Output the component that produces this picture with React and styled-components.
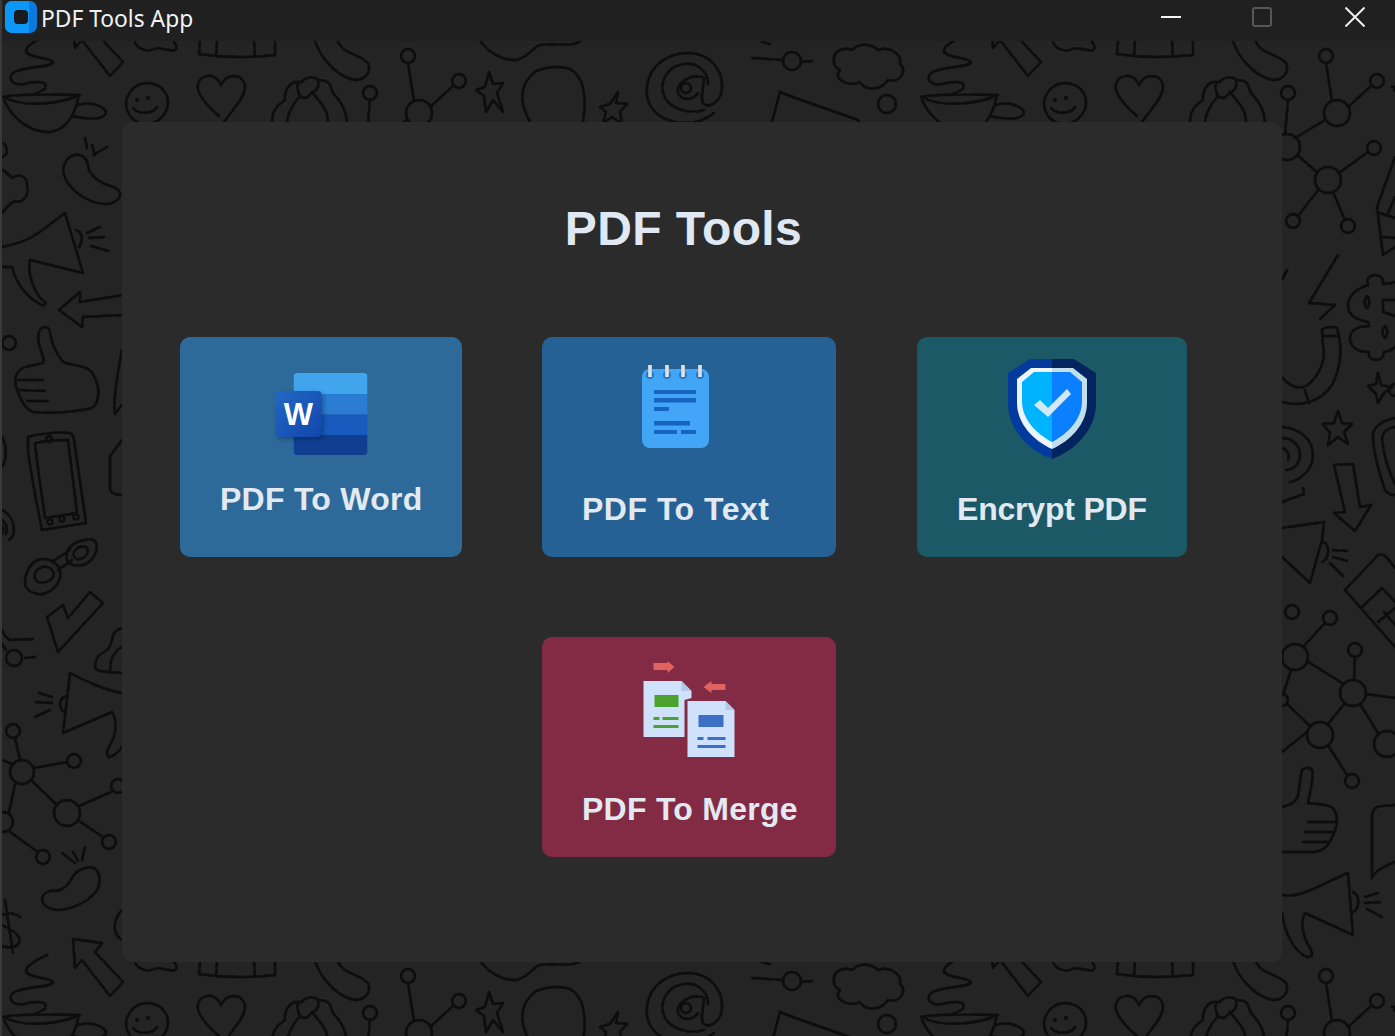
import React from "react";
import styled, { createGlobalStyle } from "styled-components";

const Global = createGlobalStyle`
  html, body { margin: 0; padding: 0; background: #232323; }
  body { font-family: "Liberation Sans", Arial, sans-serif; overflow: hidden; }
  * { box-sizing: border-box; }
`;

const Root = styled.div`
  position: relative;
  width: 1395px;
  height: 1036px;
  overflow: hidden;
  background: #242424;
  &::before {
    content: "";
    position: absolute;
    left: 0; top: 0; bottom: 0;
    width: 2px;
    background: #3a3a3a;
    z-index: 2;
  }
`;

const Wallpaper = styled.svg`
  position: absolute;
  inset: 0;
  width: 1395px;
  height: 1036px;
  fill: none;
  stroke: #0b0b0b;
  stroke-width: 2.5;
  stroke-linecap: round;
  stroke-linejoin: round;
`;

const TitleBar = styled.header`
  position: relative;
  z-index: 1;
  display: flex;
  align-items: center;
  height: 41px;
  background: #202020;
  padding-left: 5px;
`;

const AppLogo = styled.svg`
  width: 32px;
  height: 32px;
  margin-top: -7px;
`;

const AppTitle = styled.span`
  margin-left: 4px;
  margin-top: -4px;
  font-family: "Noto Sans", "Open Sans", sans-serif;
  font-size: 22.8px;
  color: #f2f2f2;
  flex: 1;
`;

const WinButton = styled.button`
  display: flex;
  align-items: center;
  justify-content: center;
  border: 0;
  padding: 0;
  background: none;
  width: 20px;
  height: 20px;
  margin-top: -7px;
  margin-right: ${(p) => p.$mr}px;
`;

const Panel = styled.main`
  position: relative;
  z-index: 1;
  margin: 81px 0 0 122px;
  width: 1160px;
  height: 840px;
  border-radius: 10px;
  background: #2b2b2b;
  padding: 83px 0 0 58px;
`;

const Content = styled.div`
  width: 1007px;
`;

const Heading = styled.h1`
  margin: 0;
  text-align: center;
  font-size: 48px;
  line-height: 48px;
  font-weight: 700;
  letter-spacing: 0.4px;
  color: #dfe8f3;
`;

const Grid = styled.div`
  margin-top: 84px;
  display: grid;
  grid-template-columns: 282px 295px 270px;
  grid-auto-rows: 220px;
  column-gap: 80px;
  row-gap: 80px;
`;

const Card = styled.button`
  display: flex;
  justify-content: flex-start;
  align-items: flex-start;
  width: ${(p) => (p.$w ? `${p.$w}px` : "100%")};
  grid-column: ${(p) => p.$col || "auto"};
  border: 0;
  border-radius: 10px;
  background: ${(p) => p.$bg};
  padding: ${(p) => p.$top}px 40px 0;
  font-family: inherit;
`;

const CardBody = styled.span`
  display: flex;
  flex-direction: column;
  align-items: center;
  gap: ${(p) => p.$gap}px;
`;

const IconSlot = styled.svg`
  display: block;
  width: 100px;
  height: 100px;
`;

const Label = styled.span`
  font-size: 32px;
  line-height: 37px;
  font-weight: 700;
  letter-spacing: ${(p) => p.$ls}px;
  color: #e3e9f0;
  white-space: nowrap;
`;

const WordLetter = styled.text`
  font-family: "Liberation Sans", Arial, sans-serif;
  font-size: 31px;
  font-weight: 700;
  fill: #fff;
`;

const paths = [
  // steam + cup
  "M47 35 C36 40 22 48 27 53 C32 58 52 58 53 62 C52 68 20 66 12 74 C8 80 14 86 24 84 C34 81 46 81 46 86 C46 90 38 93 32 95",
  "M3 97 C28 93 55 95 80 95 C60 104 25 108 3 97 Z",
  "M4 100 C14 122 34 133 50 132 C66 130 75 115 79 95",
  "M76 106 C88 100 104 106 106 112 C106 120 88 120 72 116",
  // arrow
  "M73 939 L102 943 L95 952 L123 982 L110 996 L82 960 L75 968 Z",
  // top row fragments
  "M135 42 C138 50 148 52 154 49 C160 46 168 52 175 50 C178 48 176 44 174 42",
  "M200 42 L199 54 C225 58 250 58 275 55 L275 42 M217 42 L216 56 M254 42 L255 56",
  "M314 38 C320 60 340 78 355 80 C365 80 372 72 368 63 C362 56 352 55 345 50 C340 47 338 42 336 38",
  "M481 42 C490 54 505 61 516 60 C528 58 532 48 540 45 C552 43 565 46 573 44 C577 43 579 42 580 41",
  // smile
  "M147 83 C160 83 169 93 168 104 C167 115 157 124 146 124 C134 124 126 114 126 103 C127 92 136 83 147 83 Z",
  "M133 108 C138 114 152 115 157 107",
  // heart
  "M219 116 C205 104 196 92 198 84 C201 74 215 72 221 85 C227 73 242 73 245 85 C246 97 232 110 224 122",
  // hands
  "M272 122 C272 112 276 106 285 100 C284 92 288 84 295 82 C298 82 300 82 302 82 C304 78 314 75 318 80 C322 80 328 80 330 85 C332 90 332 92 333 93 C340 100 346 108 347 122",
  "M287 122 C288 112 292 105 300 96 C297 90 297 86 298 84 M318 80 C320 86 316 92 312 92 C318 100 328 108 328 122",
  "M300 96 C304 100 308 98 312 92",
  // node group
  "M408 63 L414 101 M452 87 L430 107 M407 120 L377 138 M370 100 L367 134",
  // star
  "M489 72 L493 84 L503 83 L497 93 L503 112 L493 100 L486 112 L484 96 L476 90 L485 87 Z",
  // bubble
  "M530 122 C520 104 518 85 536 71 C548 66 562 66 570 69 C583 76 587 95 583 122",
  // star small
  "M618 92 L616 103 L627 104 L620 112 L622 124 L612 117 L603 123 L606 112 L600 107 L610 104 Z",
  // at-sign
  "M714 113 C703 122 690 125 675 122 C655 118 645 104 647 86 C650 64 670 52 690 53 C710 54 723 70 722 88 C721 102 710 108 704 104 C699 100 704 86 704 78",
  "M704 110 C690 114 672 110 665 98 C658 84 666 66 684 64 C698 62 708 72 708 84",
  "M704 78 C696 74 682 78 678 88 C676 100 692 103 698 93",
  // slider
  "M752 58 L782 60 M802 62 L812 61 M762 42 L770 44",
  // cloud
  "M834 62 C832 52 842 46 852 50 C860 42 872 44 878 50 C890 46 902 54 900 64 C908 70 900 84 888 80 C880 92 864 90 860 82 C848 88 832 78 840 70 C836 68 834 66 834 62 Z",
  // shoe
  "M772 122 L780 92 C800 100 830 110 858 120 L860 124",
  // left strip: ringing phone
  "M85 138 L87 148 M92 145 L95 155 M107 147 L93 155",
  "M75 155 C65 157 62 168 64 175 C68 188 85 203 105 204 C115 204 121 198 120 193 C118 187 110 186 105 184 C95 180 88 172 88 165 C87 158 82 154 75 155 Z",
  "M2 143 C8 145 9 155 2 157",
  "M2 170 C8 172 10 176 12 178 C20 172 28 178 27 186 C30 195 22 204 15 201 C10 203 6 208 2 213",
  // megaphone
  "M2 247 C12 245 22 242 30 238 C42 232 55 220 65 213 L83 273 L30 260 C27 272 34 295 45 302 C46 305 44 306 42 305 C30 300 16 285 12 267 L2 267",
  "M76 230 C82 232 84 240 79 247",
  "M87 233 L100 227 M89 238 L104 237 M91 246 L108 251",
  // arrow left
  "M124 295 L80 302 L80 292 L59 310 L82 327 L83 317 L124 315",
  // thumb
  "M45 327 C38 328 37 336 39 344 C41 352 45 358 43 363 C32 366 22 366 18 372 C14 378 14 384 18 392 C21 400 24 408 33 412 C50 414 75 412 92 408 C98 404 99 396 98 387 C96 378 93 372 88 369 C80 365 70 365 63 362 C55 352 51 342 50 332 C49 328 47 327 45 327 Z",
  "M18 380 L43 380 M20 390 L45 391 M27 401 L48 401",
  "M122 350 C118 370 116 385 115 395 C114 403 114 410 115 414 L122 405",
  // phone
  "M28 437 C40 433 60 432 70 433 C73 434 73 436 74 440 L86 523 L42 530 C38 510 30 470 28 450 Z",
  "M35 443 C45 441 58 440 68 440 L77 513 L45 518 C42 495 37 465 35 443 Z",
  "M2 437 C7 447 7 458 2 467",
  "M122 440 L110 456 L110 490 C112 494 118 495 122 495",
  // left @
  "M2 510 C10 514 14 522 14 530 C14 534 12 538 9 540 M2 520 C6 523 8 528 6 534 M2 526 C4 528 4 532 2 534",
  // chain
  "M28 570 C34 556 50 556 58 566 C64 576 58 588 46 593 C36 597 24 590 25 582 C25 577 26 574 28 570 Z",
  "M36 571 C42 564 52 566 54 574 C53 580 46 584 38 582 C34 579 34 575 36 571 Z",
  "M68 550 C72 542 86 538 94 540 C100 546 96 558 86 564 C78 567 70 566 67 560 C66 556 67 552 68 550 Z",
  "M74 552 C78 545 87 545 88 550 C88 556 82 560 77 559 C73 557 73 554 74 552 Z",
  "M52 562 L70 550 M58 570 L72 560",
  // check
  "M47 617 L63 605 L68 618 L90 592 L103 603 L58 652 Z",
  // left scale
  "M2 630 C4 636 8 640 12 640 L33 639 M25 658 L35 657 M2 644 L6 650",
  // cloud 2
  "M122 628 C116 630 112 633 112 640 C110 648 108 650 104 652 C98 655 95 660 95 666 C95 671 100 672 122 673 M122 647 C116 650 110 656 110 672",
  // megaphone 2
  "M122 693 C104 690 88 682 70 673 L63 733 L112 712 C118 722 116 735 110 745 C106 752 106 757 110 757 C115 755 120 750 122 747",
  "M67 696 C58 698 58 710 65 712",
  "M39 693 L52 697 M36 702 L52 703 M35 717 L50 710",
  // network links
  "M15 738 L20 760 M34 768 L67 762 M31 780 L57 805 M15 785 L9 812 M2 760 L12 764 M10 832 L38 852 M79 821 L103 837 M79 806 L111 792",
  // ringing 3
  "M62 853 L75 863 M73 852 L78 861 M85 847 L82 860",
  "M42 898 C44 892 50 890 56 891 C62 890 68 886 72 878 C76 870 86 866 94 868 C100 872 101 880 98 888 C92 900 76 908 60 910 C50 910 42 906 42 898 Z",
  // dollar
  "M5 900 L13 953 M2 915 C10 912 15 913 20 917 M2 925 C12 930 22 935 19 943 C16 948 8 948 2 946",
  "M122 910 C116 916 114 924 115 930 C116 934 118 938 122 940",
  // right strip: kite
  "M1395 157 L1377 207 L1383 255 L1395 247 M1377 212 L1395 218 M1383 237 L1395 238 M1395 197 L1388 213",
  // bolt
  "M1338 255 L1309 303 L1335 305 L1320 319 M1287 270 L1282 280",
  // dollar big
  "M1395 282 C1390 284 1386 284 1383 284 C1384 278 1380 275 1375 275 C1369 275 1366 280 1368 285 C1355 289 1348 297 1348 306 C1348 316 1358 320 1368 322 L1369 326 C1358 326 1349 330 1350 340 C1352 350 1362 352 1369 352 C1368 358 1372 360 1376 360 C1382 360 1384 356 1384 352 C1390 351 1393 349 1395 347",
  "M1367 296 C1364 298 1364 306 1367 308 C1370 306 1370 298 1367 296 Z",
  "M1385 326 C1382 328 1382 336 1385 338 C1388 336 1388 328 1385 326 Z",
  "M1395 300 L1383 300 L1383 312 L1395 316",
  // magnet
  "M1322 330 C1322 327 1335 326 1337 328 C1342 345 1342 365 1332 385 C1322 400 1303 408 1282 402",
  "M1322 330 L1323 345 C1327 360 1318 378 1306 386 C1298 390 1288 385 1282 377 M1322 336 L1337 336 M1305 390 L1309 403",
  // stars
  "M1338 411 L1342 423 L1352 424 L1344 432 L1348 444 L1338 437 L1328 445 L1330 433 L1323 424 L1334 423 Z",
  "M1378 373 L1381 385 L1392 387 L1384 393 L1378 403 L1376 394 L1368 386 L1376 384 Z",
  // @ side
  "M1282 427 C1300 428 1313 440 1313 455 C1313 470 1300 480 1290 482 M1282 438 C1292 438 1300 445 1300 455 C1300 463 1294 470 1286 470 M1282 448 C1288 450 1290 456 1288 460 M1303 488 L1304 494 L1282 502",
  // phone right
  "M1395 418 C1385 420 1376 425 1373 433 C1372 450 1380 475 1385 490 C1388 494 1392 495 1395 495 M1395 427 C1388 428 1382 432 1382 440 C1384 455 1388 470 1395 484",
  // down arrow
  "M1334 465 L1353 464 L1360 507 L1371 505 L1355 531 L1334 513 L1345 512 Z",
  // megaphone right upper
  "M1282 528 L1324 522 L1322 540 L1310 583 L1282 557",
  "M1323 542 C1330 545 1330 558 1322 562",
  "M1333 550 L1347 551 M1333 557 L1347 561 M1330 563 L1343 576",
  // eraser
  "M1345 590 L1378 555 C1385 552 1390 562 1395 568 M1345 590 L1395 647 M1362 607 L1382 588 M1378 622 L1395 608 M1395 625 L1384 612 M1382 588 L1395 602",
  // network 2 links
  "M1303 647 L1324 624 M1307 661 L1342 683 M1355 657 L1354 680 M1345 703 L1328 724 M1360 704 L1378 733 M1366 694 L1395 698 M1328 745 L1347 775 M1307 732 L1282 752 M1287 704 L1310 726 M1291 670 L1283 695",
  // thumb 2
  "M1282 807 C1292 805 1297 800 1298 795 C1300 785 1300 778 1302 770 C1305 767 1310 767 1312 770 C1314 780 1310 792 1308 803 C1318 804 1328 804 1333 808 C1338 815 1338 825 1333 835 C1328 848 1322 851 1315 852 L1282 852",
  "M1308 822 L1335 822 M1305 832 L1333 832 M1303 842 L1327 842",
  // bubble right
  "M1372 878 L1372 817 C1372 810 1376 806 1382 806 L1395 805 M1372 878 C1376 870 1385 866 1395 862",
  // megaphone 3
  "M1282 895 C1290 896 1298 895 1303 893 C1318 888 1335 878 1348 873 L1353 935 L1305 913 C1300 922 1302 935 1310 948 C1314 955 1312 957 1307 957 C1295 952 1285 935 1282 913",
  "M1353 892 C1360 895 1360 908 1353 912",
  "M1365 897 L1378 893 M1365 903 L1380 902 M1367 909 L1382 917",
  // network 1 links
  "M1297 155 L1317 172 M1339 173 L1368 152 M1319 189 L1298 216 M1333 192 L1345 220",
  "M1392 87 L1395 87",
];

const circles = [
  [370, 93, 7], [408, 56, 7], [419, 113, 13], [459, 81, 7], [887, 104, 9], [792, 61, 9],
  [686, 88, 5],
  [9, 343, 7], [49, 439, 3], [50, 522, 2.5], [62, 519, 2.5], [76, 517, 2.5],
  [14, 658, 8], [22, 772, 12], [13, 731, 7], [74, 761, 7], [67, 813, 13], [3, 822, 10],
  [43, 857, 7], [109, 842, 7], [118, 786, 7],
  [1287, 147, 13], [1328, 180, 13],
  [1374, 148, 7], [1293, 221, 7], [1348, 226, 7], [1395, 390, 6],
  [1295, 657, 13], [1292, 612, 7], [1330, 618, 7], [1353, 693, 13], [1355, 650, 7],
  [1320, 735, 13], [1352, 781, 7], [1387, 744, 13], [1282, 700, 6],
];

const dots = [[148, 98, 2], [137, 100, 2]];

function Doodles() {
  return (
    <Wallpaper viewBox="0 0 1395 1036" aria-hidden="true">
      <defs>
        <filter id="soft"><feGaussianBlur stdDeviation="0.4" /></filter>
        <g id="tile">
          {paths.map((d, i) => <path key={i} d={d} />)}
          {circles.map(([x, y, r], i) => <circle key={i} cx={x} cy={y} r={r} />)}
          {dots.map(([x, y, r], i) => <circle key={i} cx={x} cy={y} r={r} fill="#0b0b0b" stroke="none" />)}
        </g>
      </defs>
      <g filter="url(#soft)">
        {[-920, 0, 920].map((y) => [0, 918].map((x) => (
          <use key={`${x}_${y}`} href="#tile" x={x} y={y} />
        )))}
      </g>
      <rect x="0" y="375" width="2" height="10" fill="#8a8a8a" stroke="none" />
      <rect x="0" y="482" width="2" height="12" fill="#8f7c60" stroke="none" />
      <rect x="0" y="902" width="2" height="8" fill="#8f7c60" stroke="none" />
    </Wallpaper>
  );
}

const AppIcon = () => (
  <AppLogo viewBox="0 0 32 32">
    <rect width="32" height="32" rx="7" fill="#0a79dc" />
    <path d="M7 0 H24 V32 H7 A7 7 0 0 1 0 25 V7 A7 7 0 0 1 7 0 Z" fill="#0a97f7" />
    <rect x="9" y="9" width="14" height="14" rx="4" fill="#1b1b1f" />
  </AppLogo>
);

const WordIcon = () => (
  <IconSlot viewBox="0 0 100 100">
    <defs>
      <linearGradient id="wg" x1="0" y1="0" x2="1" y2="1">
        <stop offset="0" stopColor="#2368c4" />
        <stop offset="1" stopColor="#1146ac" />
      </linearGradient>
      <filter id="ws" x="-30%" y="-30%" width="160%" height="160%">
        <feGaussianBlur stdDeviation="2.5" />
      </filter>
      <clipPath id="wc"><rect x="21" y="9" width="74" height="82" rx="4" /></clipPath>
    </defs>
    <g transform="translate(1.5 0)">
      <g clipPath="url(#wc)">
        <rect x="21" y="9" width="74" height="21" fill="#41a5ee" />
        <rect x="21" y="30" width="74" height="20.5" fill="#2b7cd3" />
        <rect x="21" y="50.5" width="74" height="20.5" fill="#185abd" />
        <rect x="21" y="71" width="74" height="20" fill="#103f91" />
      </g>
      <rect x="5" y="29" width="46" height="46" rx="4" fill="#000" opacity="0.3" filter="url(#ws)" />
      <rect x="3" y="27" width="46" height="46" rx="4" fill="url(#wg)" />
      <WordLetter x="26" y="61" textAnchor="middle">W</WordLetter>
    </g>
  </IconSlot>
);

const NoteIcon = () => (
  <IconSlot viewBox="0 0 100 100">
    <defs>
      <linearGradient id="rg" x1="0" y1="0" x2="1" y2="0">
        <stop offset="0" stopColor="#b7bec3" />
        <stop offset="0.5" stopColor="#eceff1" />
        <stop offset="1" stopColor="#b7bec3" />
      </linearGradient>
    </defs>
    <g transform="translate(-1 -4)">
      <rect x="17" y="14" width="67" height="79" rx="8" fill="#42a5f5" />
      {[25, 42, 58, 75].map((x) => (
        <g key={x}>
          <circle cx={x} cy="20" r="4" fill="#1e78cf" />
          <rect x={x - 2} y="10" width="4" height="12" fill="url(#rg)" />
        </g>
      ))}
      <g fill="#1565c0">
        <rect x="29" y="35" width="42" height="4" />
        <rect x="29" y="43" width="42" height="4.5" />
        <rect x="29" y="52" width="15" height="4" />
        <rect x="29" y="66" width="36" height="4.5" />
        <rect x="29" y="75" width="23" height="4" />
        <rect x="56" y="75" width="15" height="4" />
      </g>
    </g>
  </IconSlot>
);

const ShieldIcon = () => (
  <IconSlot viewBox="0 0 100 100">
    <path d="M28 0 H50 V100 C28 92 7 72 6 46 V14 Z" fill="#033a9e" />
    <path d="M72 0 H50 V100 C72 92 93 72 94 46 V14 Z" fill="#03245f" />
    <path d="M29 9 H50 V90 C32 82 15 65 15 44 V20 Z" fill="#eef4fb" />
    <path d="M71 9 H50 V90 C68 82 85 65 85 44 V20 Z" fill="#c2dfec" />
    <path d="M32 13 H50 V83 C35 75 20 61 20 42 V23 Z" fill="#00b3ff" />
    <path d="M68 13 H50 V83 C65 75 80 61 80 42 V23 Z" fill="#0a7fff" />
    <path d="M32 46 L38 41 L46 49 L65 30 L69 35 L46 58 Z" fill="#d2e8f4" />
  </IconSlot>
);

const MergeIcon = () => (
  <IconSlot viewBox="0 0 100 100">
    <g transform="translate(-639.5 -659)">
      <path d="M653 663 H667 V661 L674 667 L667 673 V670 H653 Z" fill="#e0635f" />
      <path d="M725 684 H711 V681 L703 687 L711 693 V690 H725 Z" fill="#e0635f" />
      <path d="M643 681 H681 L691 691 V698 L684 700 V737 H643 Z" fill="#d0e2fb" />
      <path d="M681 681 L691 691 H681 Z" fill="#b4c8e6" />
      <rect x="654" y="695" width="24" height="12" fill="#4ca22e" />
      <rect x="653" y="717" width="6" height="3" fill="#4ca22e" />
      <rect x="662" y="717" width="16" height="3" fill="#4ca22e" />
      <rect x="653" y="725" width="25" height="3" fill="#4ca22e" />
      <path d="M687 701 H725 L734 710 V757 H687 Z" fill="#d0e2fb" />
      <path d="M725 701 L734 710 H725 Z" fill="#b4c8e6" />
      <rect x="698" y="715" width="25" height="12" fill="#3b70c4" />
      <rect x="697" y="737" width="6" height="3" fill="#3b70c4" />
      <rect x="707" y="737" width="18" height="3" fill="#3b70c4" />
      <rect x="697" y="745" width="28" height="3" fill="#3b70c4" />
    </g>
  </IconSlot>
);

export default function App() {
  return (
    <Root>
      <Global />
      <Doodles />
      <TitleBar>
        <AppIcon />
        <AppTitle>PDF Tools App</AppTitle>
        <WinButton $mr={71} aria-label="Minimize">
          <svg width="20" height="20"><rect y="9" width="20" height="2" fill="#f5f5f5" /></svg>
        </WinButton>
        <WinButton $mr={73} aria-label="Maximize">
          <svg width="20" height="20"><rect x="1" y="1" width="18" height="18" rx="2" fill="none" stroke="#575757" strokeWidth="2" /></svg>
        </WinButton>
        <WinButton $mr={30} aria-label="Close">
          <svg width="20" height="20"><path d="M0.5 0.5 L19.5 19.5 M19.5 0.5 L0.5 19.5" stroke="#f0f0f0" strokeWidth="2" /></svg>
        </WinButton>
      </TitleBar>
      <Panel>
        <Content>
          <Heading>PDF Tools</Heading>
          <Grid>
            <Card $bg="#2d6a9a" $top={27}>
              <CardBody $gap={17}>
                <WordIcon />
                <Label $ls={0.25}>PDF To Word</Label>
              </CardBody>
            </Card>
            <Card $bg="#256194" $top={22} $w={294}>
              <CardBody $gap={32}>
                <NoteIcon />
                <Label $ls={0.5}>PDF To Text</Label>
              </CardBody>
            </Card>
            <Card $bg="#1c5966" $top={22}>
              <CardBody $gap={32}>
                <ShieldIcon />
                <Label $ls={-0.2}>Encrypt PDF</Label>
              </CardBody>
            </Card>
            <Card $bg="#832a44" $top={22} $w={294} $col="2">
              <CardBody $gap={32}>
                <MergeIcon />
                <Label $ls={0.25}>PDF To Merge</Label>
              </CardBody>
            </Card>
          </Grid>
        </Content>
      </Panel>
    </Root>
  );
}
